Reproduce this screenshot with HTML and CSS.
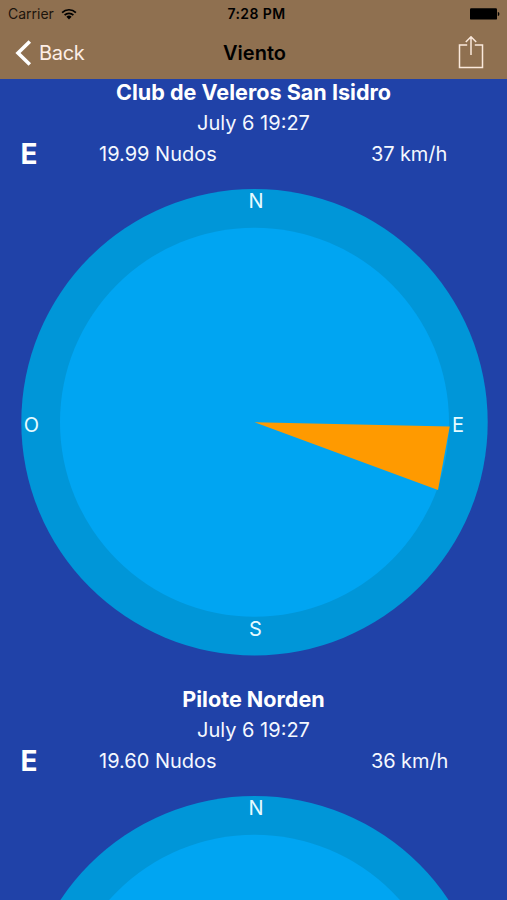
FILE: index.html
```html
<!DOCTYPE html>
<html lang="es">
<head>
    <meta charset="UTF-8">
    <meta name="viewport" content="width=device-width, initial-scale=1.0">
    <title>Viento</title>
    <link rel="stylesheet" href="styles.css">
</head>
<body>
    <header>
        <!-- Status bar -->
        <div class="status-bar">
            <div class="carrier">
                <span class="carrier-name">Carrier</span>
                <svg class="wifi" width="16" height="12" viewBox="0 0 16 12">
                    <g fill="none" stroke="#000" stroke-width="1.7">
                        <path d="M1.1 4.6a9.8 9.8 0 0 1 13.8 0"/>
                        <path d="M3.6 7.2a6.2 6.2 0 0 1 8.8 0"/>
                    </g>
                    <path d="M8 11.4L5.4 8.8a3.7 3.7 0 0 1 5.2 0z"/>
                </svg>
            </div>
            <span class="time">7:28 PM</span>
            <svg class="battery" width="30" height="12" viewBox="0 0 30 12">
                <rect x="0" y="0.2" width="27" height="11.4" rx="1.2"/>
                <path d="M27.8 4v4c1 0 1.6-.9 1.6-2s-.6-2-1.6-2z"/>
            </svg>
        </div>
        <!-- Navigation bar -->
        <nav class="nav-bar">
            <a class="back" href="#">
                <svg width="17" height="26" viewBox="0 0 17 26">
                    <path d="M14.8 1.5L3 13l11.8 11.5" fill="none" stroke="#fff" stroke-width="3.6"/>
                </svg>
                <span>Back</span>
            </a>
            <h1>Viento</h1>
            <a class="share" href="#">
                <svg width="26" height="35" viewBox="0 0 26 35">
                    <g fill="none" stroke="#fbe9dc" stroke-width="1.5">
                        <path d="M9.2 9H1.5v22.4h23V9h-7.7"/>
                        <path d="M13 19V.8M7.8 6L13 .8 18.2 6"/>
                    </g>
                </svg>
            </a>
        </nav>
    </header>

    <main>
        <section class="station">
            <h2>Club de Veleros San Isidro</h2>
            <p class="date">July 6 19:27</p>
            <div class="readings">
                <span class="direction">E</span>
                <span class="knots">19.99 Nudos</span>
                <span class="kmh">37 km/h</span>
            </div>
            <svg class="compass" width="467" height="467" viewBox="0 0 467 467">
                <circle class="ring" cx="233.5" cy="233.2" r="233.2"/>
                <circle class="dial" cx="233.5" cy="233.2" r="194.5"/>
                <path class="wind" d="M233.5 233.2L428.7 237.6L417 301z"/>
                <text x="235" y="19">N</text>
                <text x="437" y="242.5">E</text>
                <text x="234.5" y="447">S</text>
                <text x="10.5" y="242.5">O</text>
            </svg>
        </section>

        <section class="station">
            <h2>Pilote Norden</h2>
            <p class="date">July 6 19:27</p>
            <div class="readings">
                <span class="direction">E</span>
                <span class="knots">19.60 Nudos</span>
                <span class="kmh">36 km/h</span>
            </div>
            <svg class="compass" width="467" height="467" viewBox="0 0 467 467">
                <circle class="ring" cx="233.5" cy="233.2" r="233.2"/>
                <circle class="dial" cx="233.5" cy="233.2" r="194.5"/>
                <path class="wind" d="M233.5 233.2L428.7 237.6L417 301z"/>
                <text x="235" y="19">N</text>
            </svg>
        </section>
    </main>
</body>
</html>
```
FILE: styles.css
```css
html, body {
    height: 100%;
}

body {
    margin: 0;
    display: flex;
    flex-direction: column;
    overflow: hidden;
    font-family: Inter, "Liberation Sans", sans-serif;
    background-color: #2042a8;
    color: #f4f8ff;
}

header {
    flex: none;
    height: 79px;
    background-color: #8f7050;
    color: #000;
}

.status-bar, .nav-bar {
    display: grid;
    grid-template-columns: 1fr auto 1fr;
    align-items: center;
}

.status-bar {
    height: 27px;
    padding: 0 7px 0 8px;
    font-size: 14px;
}

.carrier {
    display: flex;
    align-items: center;
    gap: 7px;
    color: #1c140c;
}

.time {
    font-weight: 600;
    letter-spacing: 0.4px;
    padding-left: 5px;
}

.battery, .share {
    justify-self: end;
}

.nav-bar {
    height: 52px;
    padding: 0 23px 0 15px;
}

.back {
    display: flex;
    align-items: center;
    gap: 7px;
    color: #fdeee6;
    font-size: 20px;
    letter-spacing: -0.3px;
    text-decoration: none;
}

.share svg {
    display: block;
}

h1 {
    margin: 0;
    font-size: 20px;
    font-weight: 600;
    padding-left: 10px;
}

main {
    flex: 1;
    min-height: 0;
    overflow: hidden;
}

.station {
    height: 607px;
}

h2 {
    margin: 0;
    font-size: 21.6px;
    line-height: 26px;
    font-weight: 700;
    text-align: center;
    color: #fff;
}

.date {
    margin: 0;
    padding-top: 3px;
    font-size: 20px;
    line-height: 30px;
    text-align: center;
}

.readings {
    display: grid;
    grid-template-columns: 78.5px 272px auto;
    align-items: center;
    height: 32px;
    padding: 0 0 1px 20.5px;
    box-sizing: border-box;
    font-size: 20px;
}

.direction {
    font-size: 28px;
    line-height: 28px;
    font-weight: 700;
    color: #fff;
}

.knots {
    padding-top: 1px;
}

.kmh {
    letter-spacing: -0.1px;
}

.compass {
    display: block;
    margin: 19px 0 0 20.5px;
}

.compass text {
    font-size: 20px;
    text-anchor: middle;
    fill: #e6fbff;
}

.ring {
    fill: #0096d8;
}

.dial {
    fill: #00a5f2;
}

.wind {
    fill: #ff9a00;
}
```
